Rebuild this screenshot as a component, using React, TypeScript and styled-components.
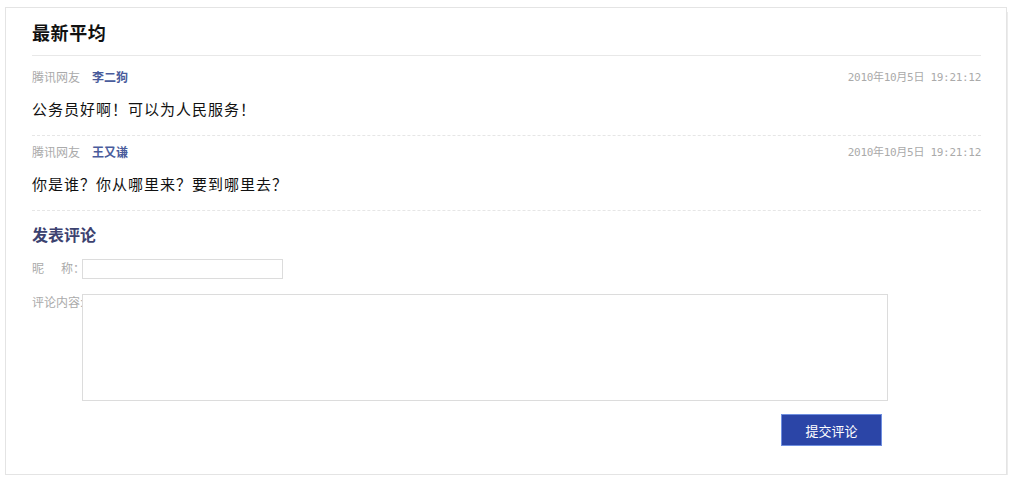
import React from "react";
import styled, { createGlobalStyle } from "styled-components";

const GlobalStyle = createGlobalStyle`
  body {
    margin: 0;
    background: #fff;
    font-family: "Liberation Sans", "Noto Sans CJK SC", sans-serif;
  }
`;

interface Comment {
  id: number;
  author: string;
  time: string;
  content: string;
}

const comments: Comment[] = [
  { id: 1, author: "李二狗", time: "2010年10月5日 19:21:12", content: "公务员好啊！可以为人民服务！" },
  { id: 2, author: "王又谦", time: "2010年10月5日 19:21:12", content: "你是谁？你从哪里来？要到哪里去？" },
];

const App = () => {
  return (
    <>
      <GlobalStyle />
      <Panel>
        <Header>
          <Title>最新平均</Title>
        </Header>
        <List>
          {comments.map((c) => (
            <Item key={c.id}>
              <Meta>
                <Source>腾讯网友</Source>
                <Author>{c.author}</Author>
                <Time>{c.time}</Time>
              </Meta>
              <Content>{c.content}</Content>
            </Item>
          ))}
        </List>
        <Form>
          <FormTitle>发表评论</FormTitle>
          <Row>
            <Label>
              <Gap>昵</Gap>称：
            </Label>
            <NameInput type="text" />
          </Row>
          <Row $top>
            <Label $top>评论内容:</Label>
            <TextArea />
          </Row>
          <Actions>
            <SubmitButton type="button">提交评论</SubmitButton>
          </Actions>
        </Form>
      </Panel>
    </>
  );
};

export default App;

const Panel = styled.div`
  box-sizing: border-box;
  width: 1002px;
  margin: 7px 0 0 5px;
  padding: 0 25px 28px 26px;
  border: 1px solid #e4e4e4;
  box-shadow: 3px 3px 0 -2px #ececec;
  background: #fff;
`;

const Header = styled.div`
  padding: 14px 0 9px;
  border-bottom: 1px solid #e8e8e8;
  margin-bottom: 5px;
`;

const Title = styled.h2`
  margin: 0;
  font-size: 18px;
  line-height: 24px;
  font-weight: bold;
  letter-spacing: 0.6px;
  color: #111;
`;

const List = styled.div`
  display: flex;
  flex-direction: column;
`;

const Item = styled.div`
  padding: 7px 0 13px;
  border-bottom: 1px dashed #e6e6e6;
`;

const Meta = styled.div`
  display: flex;
  align-items: center;
  height: 20px;
  font-size: 12px;
  line-height: 20px;
`;

const Source = styled.span`
  color: #aaa;
`;

const Author = styled.span`
  margin-left: 12px;
  color: #4a5c9c;
  font-weight: bold;
`;

const Time = styled.span`
  margin-left: auto;
  color: #aaa;
  font-family: "DejaVu Sans Mono", "Noto Sans CJK SC", monospace;
  font-size: 11px;
  letter-spacing: -0.3px;
`;

const Content = styled.p`
  margin: 10px 0 0;
  font-size: 15px;
  line-height: 24px;
  letter-spacing: 1px;
  color: #111;
`;

const Form = styled.div`
  width: 857px;
  padding-top: 13px;
`;

const FormTitle = styled.h3`
  margin: 0 0 11px;
  font-size: 16px;
  line-height: 24px;
  font-weight: bold;
  color: #3c4270;
`;

const Row = styled.div<{ $top?: boolean }>`
  display: flex;
  align-items: ${({ $top }) => ($top ? "flex-start" : "center")};
  margin-top: ${({ $top }) => ($top ? "15px" : "0")};
`;

const Label = styled.label<{ $top?: boolean }>`
  flex: 0 0 50px;
  width: 50px;
  min-width: 0;
  overflow: visible;
  font-size: 12px;
  line-height: 16px;
  color: #aaa;
  white-space: nowrap;
  padding-top: ${({ $top }) => ($top ? "1px" : "0")};
`;

const Gap = styled.span`
  margin-right: 17px;
`;

const NameInput = styled.input`
  box-sizing: border-box;
  width: 201px;
  height: 20px;
  margin: 0;
  padding: 0 4px;
  border: 1px solid #dcdcdc;
  outline: none;
`;

const TextArea = styled.textarea`
  box-sizing: border-box;
  width: 806px;
  height: 107px;
  margin: 0;
  padding: 4px;
  border: 1px solid #dcdcdc;
  resize: none;
  outline: none;
`;

const Actions = styled.div`
  display: flex;
  justify-content: flex-end;
  margin-top: 13px;
  padding-right: 7px;
`;

const SubmitButton = styled.button`
  box-sizing: border-box;
  width: 101px;
  height: 32px;
  border: 1px solid #6f8fe0;
  background: #2b45a7;
  color: #fff;
  font-family: "Liberation Sans", "Noto Sans CJK SC", sans-serif;
  font-size: 13px;
  cursor: pointer;
`;
